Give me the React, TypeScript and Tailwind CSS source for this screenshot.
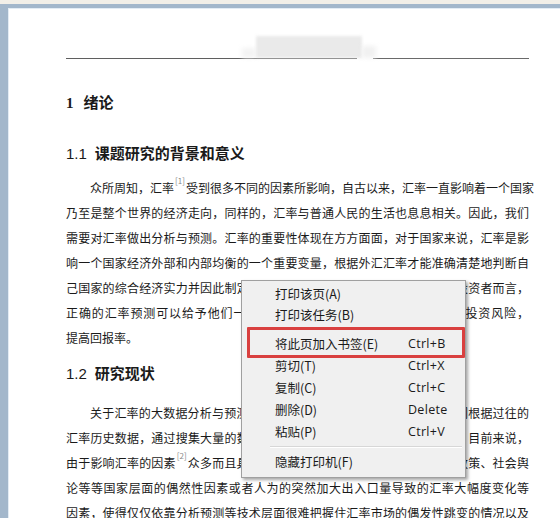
import React from 'react';

const cjk = { fontFamily: '"Noto Sans CJK SC", "Noto Sans", sans-serif' };

function Sup({ n }: { n: number }) {
  return <sup className="text-[8px] text-[#8a8a8a] align-[5px] mx-[1px]">[{n}]</sup>;
}

function Line({ children, first, last }: { children: React.ReactNode; first?: boolean; last?: boolean }) {
  return (
    <div
      className={`h-[25px] leading-[25px] whitespace-nowrap text-justify ${last ? '' : '[text-align-last:justify]'} ${first ? 'indent-6' : ''}`}
    >
      {children}
    </div>
  );
}

type MenuItem = { label: string; key?: string };

const topItems: MenuItem[] = [
  { label: '打印该页(A)' },
  { label: '打印该任务(B)' },
];

const midItems: MenuItem[] = [
  { label: '将此页加入书签(E)', key: 'Ctrl+B' },
  { label: '剪切(T)', key: 'Ctrl+X' },
  { label: '复制(C)', key: 'Ctrl+C' },
  { label: '删除(D)', key: 'Delete' },
  { label: '粘贴(P)', key: 'Ctrl+V' },
];

function Row({ item, h }: { item: MenuItem; h: string }) {
  return (
    <div className={`flex items-center ${h} pl-[33px]`}>
      <span className="w-[133px] text-[12.5px] text-[#1a1a1a]">{item.label}</span>
      <span className="text-[12.5px] text-[#1a1a1a] tracking-[0.3px]" style={{ fontFamily: '"Open Sans", "Noto Sans", sans-serif' }}>
        {item.key}
      </span>
    </div>
  );
}

function ContextMenu() {
  return (
    <div
      className="absolute left-[241px] top-[280px] w-[225px] bg-[#f0f0f0] border border-[#a0a0a0] shadow-[2px_2px_3px_rgba(0,0,0,0.35)] pt-[3px] pb-[4px]"
      style={cjk}
    >
      {topItems.map((it) => (
        <Row key={it.label} item={it} h="h-[21px]" />
      ))}
      <div className="h-[7px]" />
      {midItems.map((it) => (
        <Row key={it.label} item={it} h="h-[22px]" />
      ))}
      <div className="h-[8px] flex flex-col justify-center pl-[28px] pr-[3px]">
        <div className="h-px bg-[#d7d7d7]" />
        <div className="h-px bg-white" />
      </div>
      <Row item={{ label: '隐藏打印机(F)' }} h="h-[22px]" />
    </div>
  );
}

export default function App() {
  return (
    <div className="relative w-[560px] h-[518px] overflow-hidden bg-[#a3b7cb]" style={cjk}>
      <div className="h-[4px] bg-[#f2efe8]" />
      <div className="ml-[8px] mt-[4px] h-[510px] bg-white border-l border-t border-[#e3ecf4] pl-[57px] pr-[31px] text-[#1a1a1a]">
        {/* blurred running header */}
        <div className="h-[49px] flex items-end">
          <div className="ml-[176px] w-[14px] h-[10px] bg-[#f3f3f3] blur-[2px]" />
          <div className="w-[106px] h-[22px] bg-[#eaeaea] blur-[1.5px]" />
          <div className="w-[14px] h-[12px] bg-[#f1f1f1] blur-[2px]" />
        </div>
        <div className="flex items-center">
          <div className="h-px flex-1 bg-[#5f5f5f]" />
          <div className="w-[16px]" />
          <div className="h-px w-[156px] bg-[#6a6a6a]" />
        </div>

        <div className="mt-[30px] h-[25px] leading-[25px] text-[15px] font-bold">
          <span style={{ fontFamily: '"Liberation Serif", serif' }}>1</span>
          <span className="ml-[10px]">绪论</span>
        </div>

        <div className="mt-[26px] h-[25px] leading-[25px] text-[15px]">
          <span style={{ fontFamily: '"Liberation Sans", sans-serif' }}>1.1</span>
          <span className="ml-[8px] font-bold">课题研究的背景和意义</span>
        </div>

        <div className="mt-[10px] text-[12px]">
          <Line first>众所周知，汇率<Sup n={1} />受到很多不同的因素所影响，自古以来，汇率一直影响着一个国家</Line>
          <Line>乃至是整个世界的经济走向，同样的，汇率与普通人民的生活也息息相关。因此，我们</Line>
          <Line>需要对汇率做出分析与预测。汇率的重要性体现在方方面面，对于国家来说，汇率是影</Line>
          <Line>响一个国家经济外部和内部均衡的一个重要变量，根据外汇汇率才能准确清楚地判断自</Line>
          <Line>己国家的综合经济实力并因此制定合理的经济政策与金融政策。对于广大投资者而言，</Line>
          <Line>正确的汇率预测可以给予他们一个相对可靠的参考依据，帮助他们规避投资风险，</Line>
          <Line last>提高回报率。</Line>
        </div>

        <div className="mt-[10px] h-[25px] leading-[25px] text-[15px]">
          <span style={{ fontFamily: '"Liberation Sans", sans-serif' }}>1.2</span>
          <span className="ml-[8px] font-bold">研究现状</span>
        </div>

        <div className="mt-[15px] text-[12px]">
          <Line first>关于汇率的大数据分析与预测，国内外已有许多学者进行了研究，他们根据过往的</Line>
          <Line>汇率历史数据，通过搜集大量的数据建立模型对未来的汇率走势进行预测。目前来说，</Line>
          <Line>由于影响汇率的因素<Sup n={2} />众多而且具有着很强的不确定性，例如国家的货币政策、社会舆</Line>
          <Line>论等等国家层面的偶然性因素或者人为的突然加大出入口量导致的汇率大幅度变化等</Line>
          <Line>因素，使得仅仅依靠分析预测等技术层面很难把握住汇率市场的偶发性跳变的情况以及</Line>
        </div>
      </div>

      <ContextMenu />
      <div className="absolute left-[247px] top-[327px] w-[218px] h-[31px] border-[3px] border-[#d9403f] rounded-[1px]" />
    </div>
  );
}
